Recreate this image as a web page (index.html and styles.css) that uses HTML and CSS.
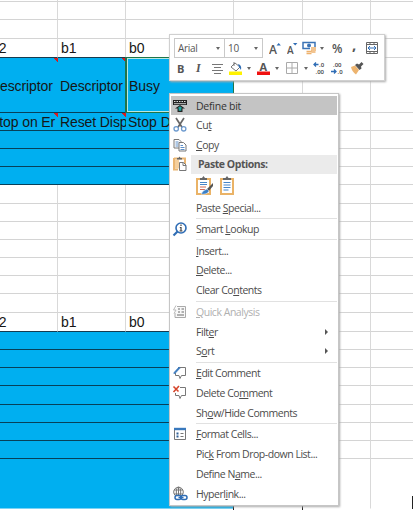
FILE: index.html
```html
<!DOCTYPE html>
<html lang="en">
<head>
<meta charset="utf-8">
<title>Register map</title>
<link rel="stylesheet" href="styles.css">
</head>
<body>
<main class="sheet">
  <div class="row h1"><i></i><i></i><i></i><i></i><i></i><i></i></div>
  <div class="row"><i></i><i></i><i></i><i></i><i></i><i></i></div>
  <div class="row h19"><i></i><i></i><i></i><i></i><i></i><i></i></div>
  <div class="row h19 head"><i class="cut">b2</i><i>b1</i><i>b0</i><i></i><i></i><i></i></div>
  <div class="row blue tall"><i class="note wide1">Descriptor</i><i class="note">Descriptor</i><i class="active">Busy</i><i></i><i></i><i></i></div>
  <div class="row blue"><i class="note wide2">Stop on Er</i><i class="note">Reset Disp</i><i>Stop Disp</i><i></i><i></i><i></i></div>
  <div class="row blue"><i></i><i></i><i></i><i></i><i></i><i></i></div>
  <div class="row blue"><i></i><i></i><i></i><i></i><i></i><i></i></div>
  <div class="row blue"><i></i><i></i><i></i><i></i><i></i><i></i></div>
  <div class="row"><i></i><i></i><i></i><i></i><i></i><i></i></div>
  <div class="row"><i></i><i></i><i></i><i></i><i></i><i></i></div>
  <div class="row"><i></i><i></i><i></i><i></i><i></i><i></i></div>
  <div class="row"><i></i><i></i><i></i><i></i><i></i><i></i></div>
  <div class="row"><i></i><i></i><i></i><i></i><i></i><i></i></div>
  <div class="row"><i></i><i></i><i></i><i></i><i></i><i></i></div>
  <div class="row h19"><i></i><i></i><i></i><i></i><i></i><i></i></div>
  <div class="row h19 head"><i class="cut">b2</i><i>b1</i><i>b0</i><i></i><i></i><i></i></div>
  <div class="row blue"><i></i><i></i><i></i><i></i><i></i><i></i></div>
  <div class="row blue"><i></i><i></i><i></i><i></i><i></i><i></i></div>
  <div class="row blue"><i></i><i></i><i></i><i></i><i></i><i></i></div>
  <div class="row blue"><i></i><i></i><i></i><i></i><i></i><i></i></div>
  <div class="row blue"><i></i><i></i><i></i><i></i><i></i><i></i></div>
  <div class="row blue"><i></i><i></i><i></i><i></i><i></i><i></i></div>
  <div class="row blue"><i></i><i></i><i></i><i></i><i></i><i></i></div>
  <div class="row blue last"><i></i><i></i><i></i><i></i><i></i><i></i></div>
</main>
<b class="tick t1"></b><b class="tick t2"></b><b class="tick t3"></b>

<section class="toolbar">
  <div class="bar">
    <div class="combo font"><span>Arial</span><em></em></div>
    <div class="combo size"><span>10</span><em></em></div>
    <svg class="g1" width="15" height="15" viewBox="0 0 15 15"><text x="0" y="13" class="fa">A</text><path d="M7.500 4.500 9.700 2l2.200 2.500z" fill="#2f6db5"/></svg>
    <svg class="g2" width="15" height="15" viewBox="0 0 15 15"><text x="0" y="13" class="fb">A</text><path d="M6 2h4.400L8.200 4.500z" fill="#2f6db5"/></svg>
    <svg class="g3" width="14" height="16" viewBox="0 0 14 16"><path d="M1 2.500h12v6H1z" fill="#fff" stroke="#3b73b5" stroke-width="1.500"/><circle cx="7" cy="5.500" r="2" fill="#3b73b5"/><path d="M8 7h6v6h-3v2H4v-5h4z" fill="#fff"/><path d="M9 8h5M9 10h5M4.500 11.500h5M4.500 13.500h5M9.500 12h4" stroke="#eeb16c" stroke-width="1.400"/></svg>
    <em class="dd g4"></em>
    <span class="pct">%</span><span class="comma">,</span>
    <svg class="g5" width="14" height="14" viewBox="0 0 14 14"><path d="M1.500 1.500h11v11h-11zM1.500 3.500h11M1.500 10.500h11M5 1.500v2M9 1.500v2M5 10.500v2M9 10.500v2" fill="none" stroke="#666"/><path d="M3 7h8M5 5 3 7l2 2M9 5l2 2-2 2" fill="none" stroke="#2f6db5"/></svg>
  </div>
  <div class="bar two">
    <span class="bold">B</span><span class="ital">I</span>
    <svg class="k1" width="13" height="13" viewBox="0 0 13 13"><path d="M1 2.500h11M3 5.500h7M1 8.500h11M3 11.500h7" stroke="#777"/></svg>
    <svg class="k2" width="14" height="14" viewBox="0 0 14 14"><path d="M0 10.500h13V14H0z" fill="#fff200"/><path d="m2 6 4-4 5 4-4 4zM5 1v4" fill="#fff" stroke="#777"/><path d="M9 3q4 1 3 6l-2-3z" fill="#2f6db5"/></svg>
    <em class="dd"></em>
    <svg class="k3" width="14" height="14" viewBox="0 0 14 14"><text x="2.500" y="9.500" class="fc">A</text><path d="M0 10.500h13V14H0z" fill="#f01010"/></svg>
    <em class="dd"></em>
    <svg class="k4" width="12" height="12" viewBox="0 0 12 12"><path d="M.5.5h11v11H.5zM6 .5v11M.5 6h11" fill="none" stroke="#aaa"/></svg>
    <em class="dd"></em>
    <svg class="k5" width="14" height="14" viewBox="0 0 14 14"><text x="6" y="5.500" class="num">.0</text><text x="2.500" y="13" class="num">.00</text><path d="M5.500 3.500H1M3 1.500l-2 2 2 2" fill="none" stroke="#2f6db5" stroke-width="1.300"/></svg>
    <svg class="k6" width="14" height="14" viewBox="0 0 14 14"><text x="2" y="5.500" class="num">.00</text><text x="6.500" y="13" class="num">.0</text><path d="M0 10.500h5M3 8.500l2 2-2 2" fill="none" stroke="#2f6db5" stroke-width="1.300"/></svg>
    <svg class="k7" width="14" height="14" viewBox="0 0 14 14"><path d="m1 6 4-1.500L9 9l-3 4.500Q2 11 1 6z" fill="#edb46f"/><path d="m5 4 2-1.500 2 1 2.500-2.500 2 2L11 5.500l.5 2L9.500 9z" fill="#555"/></svg>
  </div>
</section>

<nav class="menu">
  <div class="item hot"><svg width="16" height="16" viewBox="0 0 16 16"><path d="M1 2h14v5H1z" fill="#222"/><path d="M2 3.500h12" stroke="#ddd" stroke-dasharray="1.500 1"/><path d="M2 5.700h12" stroke="#c4c4c4"/><path d="m8 7 5 3.500h-2.500V14h-5v-3.500H3z" fill="#222"/><path d="m8 8.300 2.500 1.900H9.300v2.600H6.700v-2.600H5.500z" fill="#20a5a0"/></svg><span>Define bit</span></div>
  <div class="item"><svg width="16" height="16" viewBox="0 0 16 16"><path d="m4 1 6.500 10M12 1 5.500 11" stroke="#666" stroke-width="1.700" fill="none"/><circle cx="4.200" cy="11.800" r="2.200" fill="#fff" stroke="#6e9bcf" stroke-width="1.300"/><circle cx="11.700" cy="11.800" r="2.200" fill="#fff" stroke="#6e9bcf" stroke-width="1.300"/></svg><span>Cu<u>t</u></span></div>
  <div class="item"><svg width="16" height="16" viewBox="0 0 16 16"><path d="M2 2.500h5l2 2v6.500H2z" fill="#fff" stroke="#777"/><path d="M3.500 5h3M3.500 7h3M3.500 9h3" stroke="#5d8fc8"/><path d="M7 5.500h4.500l2.500 2.500v6H7z" fill="#fff" stroke="#777"/><path d="M8.500 8.500H11M8.500 10.500h4M8.500 12.500h4" stroke="#5d8fc8"/></svg><span><u>C</u>opy</span></div>
  <div class="item title"><svg width="16" height="16" viewBox="0 0 16 16"><path d="M2 2.500h11V8M2 2v11.500h4" stroke="#eab673" stroke-width="2" fill="none"/><path d="M3 3.500h4v9H3z" fill="#f4cf9d"/><path d="M5 3.500V2h1.500l1-1.500 1 1.500H10v1.500z" fill="#666"/><path d="M7.500 6.500h4l2.500 2.500v5.500H7.500z" fill="#fff" stroke="#777"/><path d="M11 7v2.500h3" stroke="#777" fill="none"/></svg><span>Paste Options:</span></div>
  <div class="paste">
    <svg width="18" height="20" viewBox="0 0 18 20"><path d="M2 3h13v15H2z" fill="#fff" stroke="#eab367" stroke-width="2"/><path d="M5 4V2h2l1.500-2L10 2h2v2z" fill="#666"/><path d="M5 6.500h7M5 8.500h7" stroke="#4785c8"/><path d="M5 11h6M5 13.500h5" stroke="#cf6a59"/><path d="m18 7-7 7 2 2 5-6z" fill="#555"/><path d="M12 13q-4 1-6 5 6 1 8-3z" fill="#397fc7" stroke="#fff" stroke-width=".5"/></svg>
    <svg width="16" height="20" viewBox="0 0 16 20"><path d="M2 3h12v15H2z" fill="#fff" stroke="#eab367" stroke-width="2"/><path d="M4 4V2h2.500L8 0l1.500 2H12v2z" fill="#666"/><path d="M4.500 6.500h7M4.500 9h7M4.500 11.500h7M4.500 14h5" stroke="#4785c8"/></svg>
  </div>
  <div class="item"><span>Paste <u>S</u>pecial...</span></div>
  <hr>
  <div class="item"><svg width="16" height="16" viewBox="0 0 16 16"><circle cx="9" cy="7" r="5" fill="#fff" stroke="#2f6db5" stroke-width="1.600"/><path d="m5.500 10.500-4 4" stroke="#2f6db5" stroke-width="2.200"/><path d="M9 3.500V5M7.800 6.500H9V10M7.500 10h3" stroke="#444" stroke-width="1.200" fill="none"/></svg><span>Smart <u>L</u>ookup</span></div>
  <hr>
  <div class="item"><span><u>I</u>nsert...</span></div>
  <div class="item"><span><u>D</u>elete...</span></div>
  <div class="item"><span>Clear Co<u>n</u>tents</span></div>
  <hr>
  <div class="item off"><svg width="16" height="16" viewBox="0 0 16 16"><path d="M5 2.500h8.500v11H3V9" fill="#f8f8f8" stroke="#aaa"/><path d="M6 5h2M9.500 5H12M6 8h2M9.500 8H12M5 11h7" stroke="#999" stroke-width="1.500"/><path d="M4 1.500 1.500 6H4L2 9.500" fill="none" stroke="#bbb"/></svg><span><u>Q</u>uick Analysis</span></div>
  <div class="item"><span>Filt<u>e</u>r</span><s></s></div>
  <div class="item"><span>S<u>o</u>rt</span><s></s></div>
  <hr>
  <div class="item"><svg width="16" height="16" viewBox="0 0 16 16"><path d="M6 2.500h7.500v8H9.500L8 13.500l-1-3H3.500V8" fill="#fff" stroke="#777"/><path d="m2 7.500 5-5.500 1.200 1L3 8.500H1.800z" fill="#3979bd" stroke="#3979bd" stroke-width=".6"/></svg><span><u>E</u>dit Comment</span></div>
  <div class="item"><svg width="16" height="16" viewBox="0 0 16 16"><path d="M8 2.500h5.500v8H9.500L8 13.500l-1-3H3.500V8" fill="#fff" stroke="#777"/><path d="m1.500 1.500 5 5M7 1 1.500 7" stroke="#d6452b" stroke-width="1.600"/></svg><span>Delete Co<u>m</u>ment</span></div>
  <div class="item"><span>Sh<u>o</u>w/Hide Comments</span></div>
  <hr>
  <div class="item"><svg width="16" height="16" viewBox="0 0 16 16"><path d="M2.500 2.500h11v11h-11z" fill="#fff" stroke="#777"/><path d="M2 3h12" stroke="#3979bd" stroke-width="2.400"/><path d="M4.500 7.500h2M4.500 10.500h2" stroke="#2f5f96" stroke-width="2"/><path d="M8.500 7.500h3M8.500 10.500h3" stroke="#777"/></svg><span><u>F</u>ormat Cells...</span></div>
  <div class="item"><span>Pic<u>k</u> From Drop-down List...</span></div>
  <div class="item"><span>Define N<u>a</u>me...</span></div>
  <div class="item"><svg width="16" height="16" viewBox="0 0 16 16"><circle cx="6.500" cy="6" r="4.800" fill="#fff" stroke="#777"/><path d="M6.500 1.200v9M2 4h9M2 8h9" stroke="#777"/><ellipse cx="6.500" cy="6" rx="2.200" ry="4.800" fill="none" stroke="#777"/><rect x="3" y="9.500" width="6" height="4" rx="2" fill="#fff" stroke="#2f6db5" stroke-width="1.500"/><rect x="9" y="9.500" width="6" height="4" rx="2" fill="#fff" stroke="#2f6db5" stroke-width="1.500"/><path d="M6.500 11.500h5" stroke="#2f6db5" stroke-width="1.500"/></svg><span>Hyperl<u>i</u>nk...</span></div>
</nav>
</body>
</html>
```
FILE: styles.css
```css
* { box-sizing: border-box; }
body { margin: 0; width: 414px; height: 511px; overflow: hidden; position: relative; background: #fff; font-family: "Open Sans", "Noto Sans", sans-serif; }
i, em { font-style: normal; }

.sheet { width: 413px; font: 14px/18px "Liberation Sans", Arial, sans-serif; color: #161616; }
.row { display: grid; grid-template-columns: 58px 68px 108px 69px 68px 42px; height: 18.200px; }
.row i { border-right: 1px solid #d9d9d9; border-bottom: 1px solid #d4d4d4; padding-left: 2px; white-space: nowrap; overflow: hidden; }
.row i:last-child { border-right: 0; }
.row.h1 { height: 2px; }
.row.h19 { height: 18.700px; }
.row.head i { padding-left: 3px; }
.row.head i:nth-child(-n+3) { border-bottom-color: #163b50; }
.row.blue i:nth-child(-n+3) { background-color: #00aff0; border-right: 0; border-bottom-color: #07405a; }
.row.tall { height: 55px; line-height: 56px; }
.row.last { height: 50px; }
.row.last i { border-bottom-color: #fff; }
.row.last i:nth-child(-n+3) { border-bottom-color: #7bd3f5; }
.row.head .cut { padding: 0; text-indent: -9px; }
.row .wide1 { text-indent: -12px; }
.row .wide2 { text-indent: -12px; }
.row.blue .note { background-image: linear-gradient(225deg, #d51e20 3px, transparent 3.500px); letter-spacing: -.100px; }
.row.blue i.active { border: 1px solid #207449; border-left-width: 2px; box-shadow: inset 1px 1px #b9e7e0, inset 0 -1px #b9e7e0; margin-left: -1px; margin-top: -1px; }
.tick { position: absolute; width: 1px; height: 5px; top: 505px; background: #222; }
.t1 { left: 233px; } .t2 { left: 302px; } .t3 { left: 412px; top: 496px; height: 13px; }

.toolbar { position: absolute; left: 169px; top: 34px; width: 216px; height: 47px; padding: 3px 4px; background: #fff; border: 1px solid #d0d0d0; box-shadow: 1px 1px 2px #aaa; color: #555; }
.bar { display: flex; align-items: center; height: 20px; }
.bar.two { height: 20px; padding-left: 3px; }
.combo { display: flex; align-items: center; justify-content: space-between; height: 20px; border: 1px solid #c9c9c9; padding: 0 4px 0 3px; font-size: 10px; letter-spacing: -.300px; }
.font { width: 51px; }
.size { width: 39px; margin-left: -1px; }
em { width: 0; height: 0; border: 2.500px solid transparent; border-top: 3px solid #666; border-bottom: 0; }
.fa, .fb, .fc { font-family: "Open Sans", sans-serif; fill: #555; font-weight: 600; }
.fa { font-size: 12px; } .fb { font-size: 10px; } .fc { font-size: 11px; font-weight: 700; }
.num { font: 600 6px "Open Sans", sans-serif; fill: #444; }
.g1 { margin-left: 6px; } .g2 { margin-left: 3px; } .g3 { margin-left: 0; } .g4 { margin-left: 4px; }
.pct { width: 14px; margin-left: 8px; font: 600 12px "Open Sans", sans-serif; }
.comma { width: 5px; margin-left: 6px; margin-top: -7px; font: 700 15px/15px "Open Sans", sans-serif; }
.g5 { margin-left: 8px; }
.bold { width: 18px; font-size: 11px; font-weight: 700; }
.ital { width: 11px; font: italic 700 12px "Liberation Serif", serif; padding-left: 1px; }
.k1 { margin-left: 5px; } .k2 { margin-left: 5px; } .k2 + em { margin-left: 4px; }
.k3 { margin-left: 6px; } .k3 + em { margin-left: 4px; }
.k4 { margin-left: 7px; } .k4 + em { margin-left: 6px; }
.k5 { margin-left: 5px; } .k6 { margin-left: 4px; } .k7 { margin-left: 5px; }

.menu { position: absolute; left: 169px; top: 93px; width: 170px; height: 413px; padding: 2px 1px; background: #fff; border: 1px solid #c6c6c6; box-shadow: 1px 1px 2px #aaa; font-size: 10.500px; letter-spacing: -.470px; color: #4c4c4c; }
.item { position: relative; display: flex; align-items: center; height: 19.830px; white-space: nowrap; }
.item svg { width: 16px; margin-left: 1px; flex: none; }
.item span { margin-left: 8px; line-height: 18px; }
.item > span:first-child { margin-left: 25px; }
.item u { text-underline-offset: 1px; text-decoration-thickness: 1px; }
.item s { margin-left: auto; margin-right: 9px; border: 3px solid transparent; border-left: 3px solid #555; border-right: 0; }
.hot { height: 19px; background: #c4c4c4; color: #333; letter-spacing: -.250px; }
.title { font-weight: 700; height: 19px; background: linear-gradient(#ebebeb, #ebebeb) 20px 0 no-repeat; color: #555; }
.title span { margin-left: 10px; }
.off { color: #b0b0b0; }
.paste { display: flex; align-items: center; gap: 6px; height: 24px; padding-left: 24px; }
hr { height: 1px; border: 0; margin: .350px 0 .350px 25px; background: #e1e1e1; }
```
